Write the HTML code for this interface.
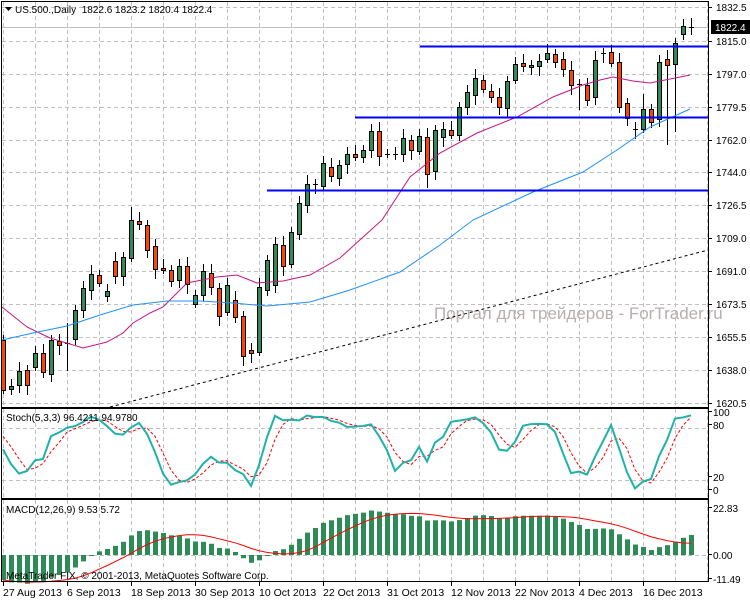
<!DOCTYPE html>
<html><head><meta charset="utf-8"><style>
html,body{margin:0;padding:0;background:#fff;width:750px;height:600px;overflow:hidden}
svg{display:block;font-family:"Liberation Sans",sans-serif}
</style></head><body>
<svg id="s" width="750" height="600" xmlns="http://www.w3.org/2000/svg"></svg>
<script>
var S=document.getElementById('s');var o='';
function L(x1,y1,x2,y2,c,w,d){o+='<line x1="'+x1+'" y1="'+y1+'" x2="'+x2+'" y2="'+y2+'" stroke="'+c+'" stroke-width="'+(w||1)+'"'+(d?' stroke-dasharray="'+d+'"':'')+'/>';}
function T(x,y,t,sz,c,a){o+='<text x="'+x+'" y="'+y+'" font-size="'+sz+'" fill="'+(c||'#000')+'"'+(a?' text-anchor="'+a+'"':'')+'>'+t+'</text>';}
function P(pts,c,w,d){o+='<polyline fill="none" points="'+pts.map(function(p){return p[0]+','+p[1]}).join(' ')+'" stroke="'+c+'" stroke-width="'+w+'"'+(d?' stroke-dasharray="'+d+'"':'')+'/>';}
var R=708;
var panels=[[2,407],[409,498],[500,581]];
for(var x=3;x<R;x+=32){panels.forEach(function(p){L(x+.5,p[0],x+.5,p[1],'#c0c0c0',1,'4,3');});}
var ys=[7,41,74,107,140,172,205,238,271,304,337,370,403];
var lb=['1832.5','1815.0','1797.0','1779.5','1762.0','1744.0','1726.5','1709.0','1691.0','1673.5','1655.5','1638.0','1620.5'];
ys.forEach(function(y){if(y>3&&y<406)L(2,y+.5,R,y+.5,'#c0c0c0',1,'4,3');});
L(2,428.5,R,428.5,'#c0c0c0',1,'4,3');L(2,480.5,R,480.5,'#c0c0c0',1,'4,3');
L(2,555.5,R,555.5,'#c0c0c0',1,'4,3');
L(2,27.5,R,27.5,'#c0c0c0',1);
T(434,319,'Портал для трейдеров - ForTrader.ru',17,'#b8aeae');
L(110,407,R,250,'#000',1,'3,3');
var B=[[340,390],[386,389],[371,385],[370,385],[353,367],[353,372],[340,374],[341,345],[343,343],[310,339],[288,310],[274,290],[275,283],[291,296],[261,276],[257,276],[220,258],[221,224],[225,250],[246,269],[268,270],[270,281],[266,280],[266,284],[295,304],[271,295],[273,287],[288,316],[285,312],[300,317],[316,356],[350,353],[287,352],[260,290],[244,285],[245,266],[232,264],[203,234],
[184,205],[184,184],[163,186],[167,176],[165,178],[154,164],[154,157],[150,157],[131,150],[131,156],[154,154],[154,154],[138,154],[140,150],[136,151],[137,174],[130,171],[129,137],[130,135],[107,135],[92,107],[78,95],[80,89],[91,97],[97,107],[81,108],[64,80],[63,66],[65,67],[61,66],[53,59],[54,62],[59,69],[70,85],[84,84],[85,100],[60,97],[53,53],[52,63],[62,107],[103,118],[129,129],[109,129],[109,122],[62,119],[59,65],[43,64],[26,34],[27,27]];
var up=[0,1,1,0,1,0,1,0,2,1,1,1,0,1,0,1,1,0,0,0,0,0,1,0,1,1,0,0,1,0,0,0,1,1,1,0,1,1,
1,2,1,0,1,1,0,1,1,0,2,2,1,0,1,0,1,1,0,1,1,1,0,0,0,1,1,0,1,1,1,0,0,0,2,0,1,2,0,0,0,2,1,0,1,0,1,1,2];
var Hi=[],Lo=[],Cl=[];
for(var i=0;i<B.length;i++){var x=3+8*i,b=B[i];var wt=b[0]-5-(i%3)*2,wb=b[1]+4+(i%4)*2;
if(i==8){wt=323;wb=371}if(i==30){wb=366}if(i==16){wt=207}if(i==83){wb=145}if(i==84){wb=132}if(i==53){wb=188}if(i==54){wb=180}if(i==72){wb=110}if(i==80){wt=94}
Hi.push(wt);Lo.push(wb);
L(x+.5,wt,x+.5,wb,'#000',1);
var c=up[i]==1?'#2e8b57':'#ff4500';var cy=up[i]==1?b[0]:b[1];if(up[i]==2)cy=b[0];Cl.push(cy);
if(b[1]-b[0]<1){L(x-2,b[0]+.5,x+3,b[0]+.5,'#000',1);}
else o+='<rect x="'+(x-2)+'.5" y="'+(b[0]+.5)+'" width="4" height="'+(b[1]-b[0])+'" fill="'+c+'" stroke="#000"/>';}
P([[2,307],[27,327],[50,338],[83,348],[107,342],[123,333],[133,323],[150,313],[163,307],[187,283],[217,277],[237,275],[257,283],[283,281],[310,275],[340,258],[362,238],[382,220],[410,177],[440,153],[477,133],[517,117],[553,97],[583,85],[600,80],[613,77],[633,81],[650,83],[690,75]],'#c71585',1);
P([[2,340],[33,333],[67,326],[100,315],[133,305],[167,301],[200,301],[233,303],[267,306],[310,302],[350,290],[400,272],[440,245],[473,220],[533,192],[583,172],[617,150],[650,127],[690,109]],'#1e90ff',1);
L(420,46.5,R,46.5,'#0000ff',2);L(355,117.5,R,117.5,'#0000ff',2);L(267,190.5,R,190.5,'#0000ff',2);
var K=[],Dd=[],raw=[];
for(var i=0;i<Cl.length;i++){var a=Math.max(0,i-4),hh=1e9,ll=-1e9;for(var j=a;j<=i;j++){hh=Math.min(hh,Hi[j]);ll=Math.max(ll,Lo[j]);}raw.push([ll-Cl[i],ll-hh]);}
for(var i=0;i<Cl.length;i++){var n=0,d=0;for(var j=Math.max(0,i-2);j<=i;j++){n+=raw[j][0];d+=raw[j][1];}K.push(d?100*n/d:50);}
K[0]=55;K[1]=38;K[2]=27;K[3]=30;
for(var i=0;i<K.length;i++){var s=0,c=0;for(var j=Math.max(0,i-2);j<=i;j++){s+=K[j];c++;}Dd.push(s/c);}
Dd[0]=70;Dd[1]=58;Dd[2]=44;
function sy(v){return 497-v*0.867;}
P(Dd.map(function(v,i){return[3+8*i,sy(v)]}),'#ff0000',1,'3,2');
P(K.map(function(v,i){return[3+8*i,sy(v)]}),'#20b2aa',2);
var pr=Cl.map(function(y){return 1815-(y-41)/1.859;});
var e12=1660,e26=1670,M=[],Sg=[];
for(var i=0;i<pr.length;i++){e12+=(pr[i]-e12)*2/13;e26+=(pr[i]-e26)*2/27;M.push(e12-e26);}
for(var i=0;i<M.length;i++){var s=0,c=0;for(var j=Math.max(0,i-8);j<=i;j++){s+=M[j];c++;}Sg.push(s/c);}
function my(v){return 555-v*2.1;}
for(var i=0;i<M.length;i++){var x=3+8*i,y=my(M[i]);o+='<rect x="'+(x-2)+'" y="'+Math.min(y,555)+'" width="5" height="'+Math.max(1,Math.abs(y-555))+'" fill="#2e8b57"/>';}
P(Sg.map(function(v,i){return[3+8*i,my(v)]}),'#ff0000',1);
panels.forEach(function(p){o+='<rect x="1.5" y="'+(p[0]-.5)+'" width="'+(R-1)+'" height="'+(p[1]-p[0]+1)+'" fill="none" stroke="#000"/>';});
ys.forEach(function(y,k){L(R,y+.5,R+4,y+.5,'#000');T(716,y+4,lb[k],10);});
o+='<rect x="711" y="20" width="39" height="14" fill="#000"/>';T(715,31,'1822.4',10,'#fff');
[[415,'100'],[428,'80'],[480,'20'],[493,'0']].forEach(function(a){L(R,a[0]-3.5,R+4,a[0]-3.5,'#000');T(713,a[0]+1,a[1],10);});
[[508,'22.83'],[555,'0.00'],[579,'-11.49']].forEach(function(a){L(R,a[0]-.5,R+4,a[0]-.5,'#000');T(713,a[0]+4,a[1],10);});
o+='<polygon points="5,7 12,7 8.5,11" fill="#000"/>';
T(15,13,'US.500.,Daily&#160;&#160;1822.6 1823.2 1820.4 1822.4',10);
T(6,421,'Stoch(5,3,3) 96.4211 94.9780',10);
T(6,513,'MACD(12,26,9) 9.53 5.72',10);
T(6,579,'MetaTrader FIX, © 2001-2013, MetaQuotes Software Corp.',10);
var dl=['27 Aug 2013','6 Sep 2013','18 Sep 2013','30 Sep 2013','10 Oct 2013','22 Oct 2013','31 Oct 2013','12 Nov 2013','22 Nov 2013','4 Dec 2013','16 Dec 2013'];
dl.forEach(function(t,k){var x=3+64*k;L(x+.5,581,x+.5,586,'#000');T(x+0,596,t,10.5);});
S.innerHTML=o;
</script>
</body></html>
